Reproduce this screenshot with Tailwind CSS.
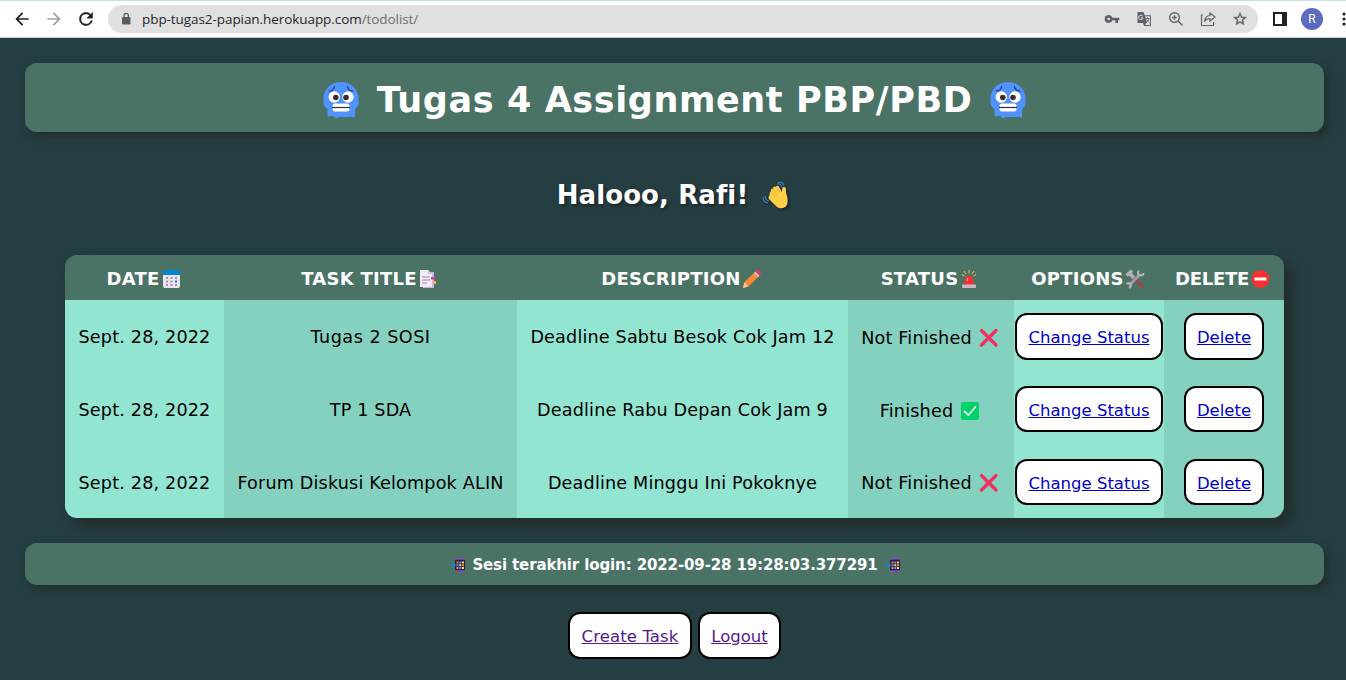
<!DOCTYPE html>
<html lang="id">
<head>
<meta charset="utf-8">
<title>To Do List</title>
<script src="https://cdn.jsdelivr.net/npm/@tailwindcss/browser@4"></script>
</head>
<body class="w-[1346px] h-[680px] overflow-hidden bg-[#253e42] font-['DejaVu_Sans',sans-serif] text-black">
<svg class="hidden">
  <symbol id="cold" viewBox="0 0 36 36">
    <path fill="#5092ff" d="M18 0C28 0 35.500 7 35.500 17v5c0 2-1 3-2.500 4l-1 2v6.500c0 1.500-2 1.500-2.500 0-3 .5-6 .5-9 .5-2 0-4 0-6 .5-.5 1.500-2.500 1.500-3-.5-1.500-1-3-1.500-4-1-1 1-3 .5-3-1V27c-1.500-1-4-3-4-6v-4C.5 7 8 0 18 0z"/>
    <circle cx="11.300" cy="15" r="5.700" fill="#fff"/><circle cx="25" cy="15" r="5.700" fill="#fff"/>
    <circle cx="12.800" cy="15.500" r="2.800" fill="#402a32"/><circle cx="23" cy="15.500" r="2.800" fill="#402a32"/>
    <path d="M6 9c3 0 5-1.500 5.500-4.500M30 9c-3 0-5-1.500-5.500-4.500" fill="none" stroke="#25356b" stroke-width="1.200" stroke-linecap="round"/>
    <rect x="9.500" y="21.500" width="17" height="8" rx="2.500" fill="#fff"/><path d="M9 25.500h18" stroke="#402a32" stroke-width="1.200"/>
  </symbol>
  <symbol id="cross" viewBox="0 0 20 20"><path d="M2.500 2.500l14.500 14.500M17 2.500L2.500 17" stroke="#f0305f" stroke-width="3.400" stroke-linecap="round"/></symbol>
  <symbol id="phone" viewBox="0 0 16 16">
    <rect x="5" y="1" width="10" height="14" rx="1" fill="#7a55b8"/><rect x="5" y="2.700" width="10" height="10.600" fill="#321b41"/>
    <path d="M6.500 4.500h2v2h-2zM12 7.300h2v2h-2zM6.500 10h2v2h-2z" fill="#f28a34"/><path d="M9.300 4.500h2v2h-2zM6.500 7.300h2v2h-2zM9.300 10h2v2h-2z" fill="#58a3d8"/><path d="M12 4.500h2v2h-2zM9.300 7.300h2v2h-2zM12 10h2v2h-2z" fill="#f5d69a"/>
    <path d="M.5 7.200H3V5l3 3-3 3V8.800H.5z" fill="#0a8ad8"/>
  </symbol>
</svg>

<header class="h-[38px] bg-white border-t border-t-[#c3e3e6] border-b border-b-[#c8cbcb] flex items-center font-['Open_Sans',sans-serif] *:shrink-0">
  <svg class="w-5 h-5 ml-3" viewBox="0 0 24 24" fill="#202124"><path d="M20 11H7.830l5.590-5.590L12 4l-8 8 8 8 1.410-1.410L7.830 13H20v-2z"/></svg>
  <svg class="w-5 h-5 ml-3" viewBox="0 0 24 24" fill="#a0a0a0"><path d="M12 4l-1.410 1.410L16.170 11H4v2h12.170l-5.580 5.590L12 20l8-8z"/></svg>
  <svg class="w-5 h-5 ml-3" viewBox="0 0 24 24" fill="#202124" stroke="#202124" stroke-width=".5"><path d="M17.650 6.350A7.960 7.960 0 0 0 12 4a8 8 0 1 0 7.730 10h-2.080A6 6 0 1 1 12 6c1.660 0 3.140.69 4.220 1.780L13 11h7V4l-2.350 2.350z"/></svg>
  <div class="ml-3 w-[1150px] h-7 rounded-full bg-[#e0e0e0] flex items-center pl-3 pr-[10px] text-[13.5px]">
    <svg class="w-3 h-3.5" viewBox="0 0 12 14"><rect x="2" y="5" width="8.500" height="7.500" rx="1" fill="#5a5d60"/><path d="M4 5V3.500a2.200 2.200 0 0 1 4.400 0V5" fill="none" stroke="#5a5d60" stroke-width="1.300"/></svg>
    <span class="ml-2.5 whitespace-nowrap text-[#25272a] tracking-[-0.07px]">pbp-tugas2-papian.herokuapp.com<span class="text-[#6b6e70]">/todolist/</span></span>
    <div class="ml-auto flex items-center gap-4 text-[#5f6368]">
      <svg class="w-4 h-4" viewBox="0 0 24 24" fill="currentColor"><path d="M12.650 10A6 6 0 0 0 1 12a6 6 0 0 0 11.650 2H17v4h4v-4h2v-4H12.650zM7 14a2 2 0 1 1 0-4 2 2 0 0 1 0 4z"/></svg>
      <svg class="w-4 h-4" viewBox="0 0 16 16"><path d="M1.500 1h6l1.200 3.200H15V15H8L7 12H1.500z" fill="#5f6368"/><path d="M9.200 5.200h4.900v8.900H8.900l2-2.500z" fill="#e0e0e0"/><path d="M6.700 5.200A2.200 2.200 0 1 0 7 7H5" fill="none" stroke="#e0e0e0" stroke-width="1"/><path d="M9.800 7.500h3.800M11.500 6.500v1M12.900 7.500c-.3 2-1.500 3-2.500 3.500M10.500 8.500l2.700 3" fill="none" stroke="#5f6368" stroke-width=".9"/></svg>
      <svg class="w-4 h-4" viewBox="0 0 16 16" fill="none" stroke="currentColor" stroke-width="1.400"><circle cx="6.500" cy="6.500" r="4.800"/><path d="M10 10l4.500 4.500M4.300 6.500h4.400M6.500 4.300v4.400"/></svg>
      <svg class="w-4 h-4" viewBox="0 0 16 16" fill="none" stroke="currentColor" stroke-width="1.200"><path d="M3 4H1.500v10.500h12V11"/><path d="M10 2l5 4-5 4V7.500c-2.500 0-4.300 1-5.500 3 .3-3.500 2-5.700 5.500-6z"/></svg>
      <svg class="w-4 h-4" viewBox="0 0 24 24" fill="currentColor"><path d="M22 9.240l-7.190-.62L12 2 9.190 8.630 2 9.240l5.460 4.730L5.820 21 12 17.270 18.180 21l-1.630-7.030L22 9.240zM12 15.400l-3.760 2.270 1-4.280-3.320-2.880 4.380-.38L12 6.100l1.710 4.040 4.380.38-3.320 2.880 1 4.280L12 15.400z" stroke="currentColor" stroke-width=".6"/></svg>
    </div>
  </div>
  <svg class="w-3.5 h-3.5 ml-[15px]" viewBox="0 0 14 14"><path d="M0 0h14v14H0z" fill="#202124"/><path d="M2 2h7v10H2z" fill="#fff"/></svg>
  <div class="ml-3.5 w-[22px] h-[22px] rounded-full bg-[#5c6bc0] text-white text-[12px] flex items-center justify-center font-['Roboto',sans-serif]">R</div>
  <svg class="w-1 h-4 ml-[19px]" viewBox="0 0 4 16" fill="#202124"><circle cx="2" cy="3" r="1.600"/><circle cx="2" cy="8" r="1.600"/><circle cx="2" cy="13" r="1.600"/></svg>
</header>

<main class="px-[25px] pr-[22px] pt-[25px]">
  <h1 class="h-[69px] rounded-xl bg-[#4a7366] shadow-[4px_4px_8px_#222d2b] flex items-center justify-center gap-[18px] pt-[5px] text-white font-bold text-[35px] tracking-[0.6px] whitespace-nowrap">
    <svg class="w-9 h-9"><use href="#cold"/></svg><span>Tugas 4 Assignment PBP/PBD</span><svg class="w-9 h-9"><use href="#cold"/></svg>
  </h1>

  <h2 class="mt-[48px] h-[30px] flex items-center justify-center gap-3.5 pr-[2px] text-white font-bold text-[26px] tracking-[0.1px] whitespace-nowrap text-shadow-[2px_2px_3px_#1b2627]">
    <span>Halooo, Rafi!</span>
    <svg class="w-7 h-7 drop-shadow-[2px_2px_1px_#1b2627]" viewBox="0 0 28 28"><path d="M8 14c-1-2 0-3 1-3-1-3 1-4 2-3 0-3 2-3 3-2 1-2 3-1 3 0l3 5c0-3 0-5 2-5 3 0 1 3 3 9 2 8-1 12-5 12-3 1-5-1-7-3l-6-6c-1-2 0-3 1-4z" fill="#ffcf45"/><path d="M11 8l4 6M14 6l4 6M9 11l4 5" stroke="#eaa92f" stroke-width=".8"/><path d="M15 3c3-1 5 1 5 4M16 1.500c4-1 6 1 6 4M3 15c0 3 2 5 4 5M1 16c0 3 2 6 5 6" fill="none" stroke="#3f80bd" stroke-width="1.100"/></svg>
  </h2>

  <section class="mt-[45px] ml-10 w-[1219px] rounded-xl shadow-[8px_8px_12px_#222d2b]">
    <div class="rounded-xl overflow-hidden grid grid-cols-[159px_293px_331px_166px_150px_120px] grid-rows-[45px_73px_73px_72px] text-[17.6px] tracking-[0.17px] whitespace-nowrap">
      <div class="bg-[#4a7366] col-span-6 grid grid-cols-subgrid text-white font-bold items-center pt-[2px] text-[18px] tracking-[0.25px]">
        <div class="flex items-center justify-center gap-[2px] pr-px"><span>DATE</span><svg class="w-5 h-5" viewBox="0 0 20 20"><rect x="1" y="2" width="17" height="17" rx="2" fill="#ede6f2"/><path d="M1 6V3a2 2 0 0 1 2-2h13a2 2 0 0 1 2 2v3z" fill="#0584d2"/><path d="M4 9h2M8.500 9h2M13 9h2M4 12.500h2M8.500 12.500h2M4 16h2M8.500 16h2M13 16h2" stroke="#8d7c9c" stroke-width="1.700"/><path d="M13 12.500h2" stroke="#0584d2" stroke-width="2"/></svg></div>
        <div class="flex items-center justify-center gap-[1px] pr-[2px]"><span>TASK TITLE</span><svg class="w-5 h-5" viewBox="0 0 20 20"><path d="M5 3h11v16H5z" fill="#c9b9d7"/><path d="M2 1h8l4 4v13H2z" fill="#f1e9f6"/><path d="M10 1v4h4" fill="#cdbdda"/><path d="M4 8h8M4 11h8M4 14h5" stroke="#a08eaf"/><path d="M13 8h4v2.500h-4z" fill="#d33ab0"/><path d="M15.500 12H18v3h-2.500z" fill="#f4b53a"/></svg></div>
        <div class="flex items-center justify-center gap-[1px] pr-[2px]"><span>DESCRIPTION</span><svg class="w-5 h-5" viewBox="0 0 20 20"><path d="M1 19l1.500-6L13 3l4 4L6.500 17.500z" fill="#fb8b30"/><path d="M1 19l1.300-5.500 4 4z" fill="#f6c79c"/><path d="M12 4l1.500-1.500 4 4L16 8z" fill="#d6c9df"/><path d="M13.500 2.500L15 1c1.500-1 5 2.500 4 4l-1.500 1.500z" fill="#ee2f62"/></svg></div>
        <div class="flex items-center justify-center gap-[1px] pr-[2px]"><span>STATUS</span><svg class="w-5 h-5" viewBox="0 0 20 20"><path d="M4.500 16L6.500 9c.5-3 6.500-3 7 0L15.500 16z" fill="#f4302f"/><path d="M8 12l.7-3" stroke="#ff9991" stroke-width="1.200"/><rect x="3" y="15.500" width="14" height="3.500" rx="1" fill="#c6bac8"/><path d="M10 1v3.500M5 2l2 3M15 2l-2 3M3 5.500l2.500 1.500M17 5.500L14.500 7" stroke="#f4c63b" stroke-width="1"/></svg></div>
        <div class="flex items-center justify-center gap-[1px] pr-[2px]"><span>OPTIONS</span><svg class="w-5 h-5" viewBox="0 0 20 20" fill="none"><path d="M8 8l9 9.500" stroke="#8e4b48" stroke-width="3.400" stroke-linecap="round"/><path d="M1.500 6.500L7 1.500M4 4l5 5" stroke="#b9aebd" stroke-width="3.400"/><path d="M4 16.500L15.500 5" stroke="#a79bac" stroke-width="2.600"/><path d="M14 1.500c-2 2-1 5 1 5 2 0 3.500-.5 3.500-2.500M1.500 15c1.500-2 4.500-1 4.500 1 0 1.500-.5 2.500-2 3" stroke="#b9aebd" stroke-width="2"/></svg></div>
        <div class="flex items-center justify-center gap-[1px] tracking-[-0.25px] pr-[3px]"><span>DELETE</span><svg class="w-5 h-5" viewBox="0 0 20 20"><circle cx="10.500" cy="10" r="9" fill="#f8312f"/><rect x="4.500" y="8.500" width="12" height="3" rx=".5" fill="#fff"/></svg></div>
      </div>

      <div class="bg-[#91e5d1] grid place-items-center pt-0.5">Sept. 28, 2022</div>
      <div class="bg-[#85d1bf] grid place-items-center pt-0.5 tracking-[0.5px]">Tugas 2 SOSI</div>
      <div class="bg-[#91e5d1] grid place-items-center pt-0.5">Deadline Sabtu Besok Cok Jam 12</div>
      <div class="bg-[#85d1bf] flex items-center justify-center gap-[7px] pt-[3px] pr-[2px]">Not Finished<svg class="w-5 h-5"><use href="#cross"/></svg></div>
      <div class="bg-[#91e5d1] grid place-items-center"><a class="w-[148px] h-[47px] rounded-xl border-2 border-black bg-white text-[#0000c8] text-[16.5px] tracking-normal underline grid place-items-center pt-[3px]">Change Status</a></div>
      <div class="bg-[#85d1bf] grid place-items-center"><a class="w-20 h-[47px] rounded-xl border-2 border-black bg-white text-[#0000c8] text-[16.5px] tracking-normal underline grid place-items-center pt-[3px]">Delete</a></div>

      <div class="bg-[#91e5d1] grid place-items-center pt-0.5">Sept. 28, 2022</div>
      <div class="bg-[#85d1bf] grid place-items-center pt-0.5">TP 1 SDA</div>
      <div class="bg-[#91e5d1] grid place-items-center pt-0.5">Deadline Rabu Depan Cok Jam 9</div>
      <div class="bg-[#85d1bf] flex items-center justify-center gap-[7px] pt-[3px] pr-[2px]">Finished<svg class="w-5 h-5" viewBox="0 0 20 20"><rect x="1" y="1" width="18" height="18" rx="2" fill="#00d26a"/><path d="M4.500 10.500l4 3.500 7-8" fill="none" stroke="#f4f4f4" stroke-width="1.700" stroke-linecap="round" stroke-linejoin="round"/></svg></div>
      <div class="bg-[#91e5d1] grid place-items-center pb-px"><a class="w-[148px] h-[46px] rounded-xl border-2 border-black bg-white text-[#0000c8] text-[16.5px] tracking-normal underline grid place-items-center pt-1">Change Status</a></div>
      <div class="bg-[#85d1bf] grid place-items-center pb-px"><a class="w-20 h-[46px] rounded-xl border-2 border-black bg-white text-[#0000c8] text-[16.5px] tracking-normal underline grid place-items-center pt-1">Delete</a></div>

      <div class="bg-[#91e5d1] grid place-items-center pt-[3px]">Sept. 28, 2022</div>
      <div class="bg-[#85d1bf] grid place-items-center pt-[3px]">Forum Diskusi Kelompok ALIN</div>
      <div class="bg-[#91e5d1] grid place-items-center pt-[3px]">Deadline Minggu Ini Pokoknye</div>
      <div class="bg-[#85d1bf] flex items-center justify-center gap-[7px] pt-[2px] pr-[2px]">Not Finished<svg class="w-5 h-5"><use href="#cross"/></svg></div>
      <div class="bg-[#91e5d1] grid place-items-center"><a class="w-[148px] h-[46px] rounded-xl border-2 border-black bg-white text-[#0000c8] text-[16.5px] tracking-normal underline grid place-items-center pt-1">Change Status</a></div>
      <div class="bg-[#85d1bf] grid place-items-center"><a class="w-20 h-[46px] rounded-xl border-2 border-black bg-white text-[#0000c8] text-[16.5px] tracking-normal underline grid place-items-center pt-1">Delete</a></div>
    </div>
  </section>

  <div class="mt-[25px] h-[42px] rounded-xl bg-[#4a7366] shadow-[4px_4px_8px_#222d2b] flex items-center justify-center gap-1.5 pt-0.5 pl-[2px] text-white font-bold text-[15px] tracking-[-0.12px] whitespace-nowrap">
    <svg class="w-4 h-4"><use href="#phone"/></svg><span>Sesi terakhir login: 2022-09-28 19:28:03.377291</span><svg class="w-4 h-4 ml-px"><use href="#phone"/></svg>
  </div>

  <nav class="mt-[27px] flex justify-center gap-1.5 text-[16.5px] text-[#551a8b] whitespace-nowrap">
    <a class="w-[124px] h-[47px] rounded-xl border-2 border-black bg-white underline grid place-items-center pt-[3px] tracking-[0.1px]">Create Task</a>
    <a class="w-[83px] h-[47px] rounded-xl border-2 border-black bg-white underline grid place-items-center pt-[3px]">Logout</a>
  </nav>
</main>
</body>
</html>
